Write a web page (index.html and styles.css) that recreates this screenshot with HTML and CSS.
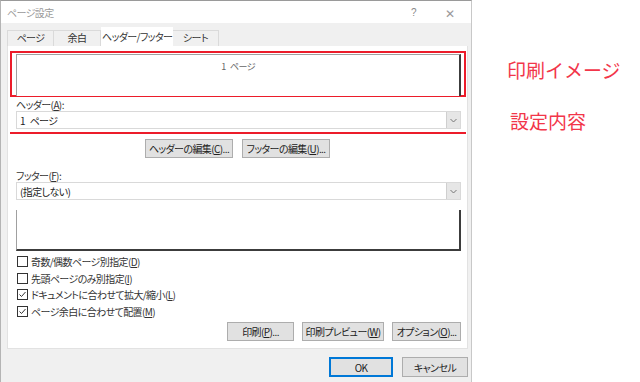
FILE: index.html
```html
<!DOCTYPE html>
<html>
<head>
  <title>ページ設定</title>
  <meta charset="UTF-8">
  <link rel="stylesheet" href="styles.css">
</head>
<body>
  <div class="dialog">
    <div class="titlebar">
      <span class="title">ページ設定</span>
      <span class="help">?</span>
      <span class="close">✕</span>
    </div>
    <div class="tabs">
      <div class="tab">ページ</div>
      <div class="tab">余白</div>
      <div class="tab active">ヘッダー/フッター</div>
      <div class="tab">シート</div>
    </div>
    <div class="panel">
      <div class="mark-box">
        <div class="preview header-preview"><span>1 ページ</span></div>
      </div>
      <div class="field-label">ヘッダー(<u>A</u>):</div>
      <div class="select">
        <span>1 ページ</span>
        <span class="arrow"><svg width="7" height="5" viewBox="0 0 7 5"><path d="M0.5 1 L3.5 4 L6.5 1" fill="none" stroke="#777" stroke-width="1"/></svg></span>
      </div>
      <div class="mark-line"></div>
      <div class="edit-buttons">
        <button class="btn edit-btn">ヘッダーの編集(<u>C</u>)...</button>
        <button class="btn edit-btn">フッターの編集(<u>U</u>)...</button>
      </div>
      <div class="field-label footer-label">フッター(<u>F</u>):</div>
      <div class="select">
        <span>(指定しない)</span>
        <span class="arrow"><svg width="7" height="5" viewBox="0 0 7 5"><path d="M0.5 1 L3.5 4 L6.5 1" fill="none" stroke="#777" stroke-width="1"/></svg></span>
      </div>
      <div class="preview footer-preview"></div>
      <div class="options">
        <label class="check"><span class="box"></span><span>奇数/偶数ページ別指定(<u>D</u>)</span></label>
        <label class="check"><span class="box"></span><span>先頭ページのみ別指定(<u>I</u>)</span></label>
        <label class="check"><span class="box"><svg width="9" height="9" viewBox="0 0 9 9"><path d="M1.5 4.5 L3.5 6.5 L7.5 2" fill="none" stroke="#333" stroke-width="1"/></svg></span><span>ドキュメントに合わせて拡大/縮小(<u>L</u>)</span></label>
        <label class="check"><span class="box"><svg width="9" height="9" viewBox="0 0 9 9"><path d="M1.5 4.5 L3.5 6.5 L7.5 2" fill="none" stroke="#333" stroke-width="1"/></svg></span><span>ページ余白に合わせて配置(<u>M</u>)</span></label>
      </div>
      <div class="panel-buttons">
        <button class="btn print-btn">印刷(<u>P</u>)...</button>
        <button class="btn preview-btn">印刷プレビュー(<u>W</u>)</button>
        <button class="btn option-btn">オプション(<u>O</u>)...</button>
      </div>
    </div>
    <div class="dialog-buttons">
      <button class="btn ok-btn">OK</button>
      <button class="btn cancel-btn">キャンセル</button>
    </div>
  </div>
  <div class="notes">
    <p class="note note-preview">印刷イメージ</p>
    <p class="note note-settings">設定内容</p>
  </div>
</body>
</html>
```

FILE: styles.css
```css
body {
  display: flex;
  margin: 0;
  width: 640px;
  height: 382px;
  overflow: hidden;
  background-color: #ffffff;
  font-family: "Noto Sans CJK JP", "Noto Sans", sans-serif;
  font-feature-settings: "palt";
  font-size: 10px;
  letter-spacing: -0.6px;
  word-spacing: 3px;
  color: #222;
}
u {
  text-decoration: underline;
  text-underline-offset: 1px;
}
.dialog {
  display: flex;
  flex-direction: column;
  flex-shrink: 0;
  width: 472px;
  height: 382px;
  background-color: #f0f0f0;
  border-left: 1px solid #b4b4b4;
  border-right: 1px solid #c8c8c8;
  border-top: 1px solid #9a9a9a;
  box-sizing: border-box;
}
.titlebar {
  display: flex;
  align-items: center;
  height: 22px;
  padding: 0 0 0 6px;
  background-color: #ffffff;
  color: #9a9a9a;
  font-size: 10px;
}
.title {
  flex: 1;
}
.help {
  width: 34px;
  color: #888;
  font-family: "Liberation Sans", sans-serif;
}
.close {
  width: 26px;
  color: #999;
  font-size: 12px;
}
.tabs {
  display: flex;
  align-items: flex-end;
  height: 23px;
  padding-left: 6px;
}
.tab {
  height: 14px;
  line-height: 14px;
  padding-bottom: 1px;
  text-align: center;
  white-space: nowrap;
  background-color: #f0f0f0;
  border: 1px solid #dadada;
  border-bottom: none;
  color: #333;
}
.tab:nth-child(1) { width: 45px; }
.tab:nth-child(2) { width: 46px; border-left: none; }
.tab:nth-child(3) { width: 70px; }
.tab:nth-child(4) { width: 45px; border-left: none; }
.tab.active {
  height: 17px;
  line-height: 17px;
  background-color: #ffffff;
  border-color: #ffffff;
}
.panel {
  display: flex;
  flex-direction: column;
  width: 461px;
  height: 303px;
  margin-left: 6px;
  padding: 5px 0 0 2px;
  background-color: #ffffff;
  border: 1px solid #e2e2e2;
  border-top: none;
  box-sizing: border-box;
}
.mark-box {
  width: 456px;
  height: 46px;
  padding: 1px 3px 0 4px;
  border: 2px solid #ec1c2a;
  box-sizing: border-box;
}
.preview {
  background-color: #ffffff;
  border-top: 1px solid #a0a0a0;
  border-left: 1px solid #a0a0a0;
  border-right: 2px solid #3c3c3c;
  border-bottom: 2px solid #3c3c3c;
  box-sizing: border-box;
}
.header-preview {
  display: flex;
  justify-content: center;
  height: 42px;
  padding-top: 5px;
  border-bottom: none;
  color: #666;
  font-size: 9px;
}
.field-label {
  margin: 1px 0 0 6px;
  height: 13px;
  line-height: 13px;
  white-space: nowrap;
  color: #333;
}
.select {
  display: flex;
  align-items: center;
  justify-content: space-between;
  width: 445px;
  height: 18px;
  margin: 0 0 0 6px;
  padding-left: 3px;
  white-space: nowrap;
  background-color: #ffffff;
  border: 1px solid #d9d9d9;
  box-sizing: border-box;
}
.arrow {
  display: flex;
  align-items: center;
  justify-content: center;
  width: 13px;
  height: 16px;
  background-color: #e6e6e6;
  border-left: 1px solid #cfcfcf;
}
.mark-line {
  width: 456px;
  height: 2px;
  margin-top: 3px;
  background-color: #ec1c2a;
}
.btn {
  display: block;
  height: 19px;
  padding: 0;
  line-height: 17px;
  text-align: center;
  white-space: nowrap;
  background-color: #e1e1e1;
  border: 1px solid #adadad;
  font-family: inherit;
  font-feature-settings: "palt";
  font-size: 10px;
  letter-spacing: -0.6px;
  color: #222;
}
.edit-buttons {
  display: flex;
  justify-content: center;
  gap: 9px;
  margin: 5px 0 0 0;
  padding-right: 2px;
}
.edit-btn {
  width: 88px;
}
.footer-label {
  margin-top: 11px;
}
.footer-preview {
  width: 445px;
  height: 41px;
  margin: 10px 0 0 6px;
  border-top: none;
}
.options {
  display: flex;
  flex-direction: column;
  gap: 3px;
  margin: 4px 0 0 7px;
}
.check {
  display: flex;
  align-items: center;
  gap: 3px;
  height: 13.5px;
  white-space: nowrap;
  color: #333;
}
.box {
  display: flex;
  align-items: center;
  justify-content: center;
  width: 11px;
  height: 11px;
  background-color: #ffffff;
  border: 1px solid #333;
  box-sizing: border-box;
}
.panel-buttons {
  display: flex;
  justify-content: flex-end;
  gap: 8px;
  margin: 4px 6px 0 0;
}
.print-btn { width: 67px; }
.preview-btn { width: 82px; }
.option-btn { width: 69px; }
.dialog-buttons {
  display: flex;
  justify-content: flex-end;
  gap: 9px;
  margin-top: 8px;
  padding-right: 3px;
}
.ok-btn {
  width: 64px;
  height: 20px;
  border: 1px solid #0078d7;
  box-shadow: inset 0 0 0 1px #0078d7;
}
.cancel-btn {
  width: 66px;
  height: 20px;
}
.notes {
  padding: 58px 0 0 35px;
  color: #f2364a;
  font-size: 19px;
  font-feature-settings: normal;
  letter-spacing: 0;
}
.note {
  margin: 0;
  line-height: 24px;
}
.note-settings {
  margin: 27px 0 0 3px;
}
```
